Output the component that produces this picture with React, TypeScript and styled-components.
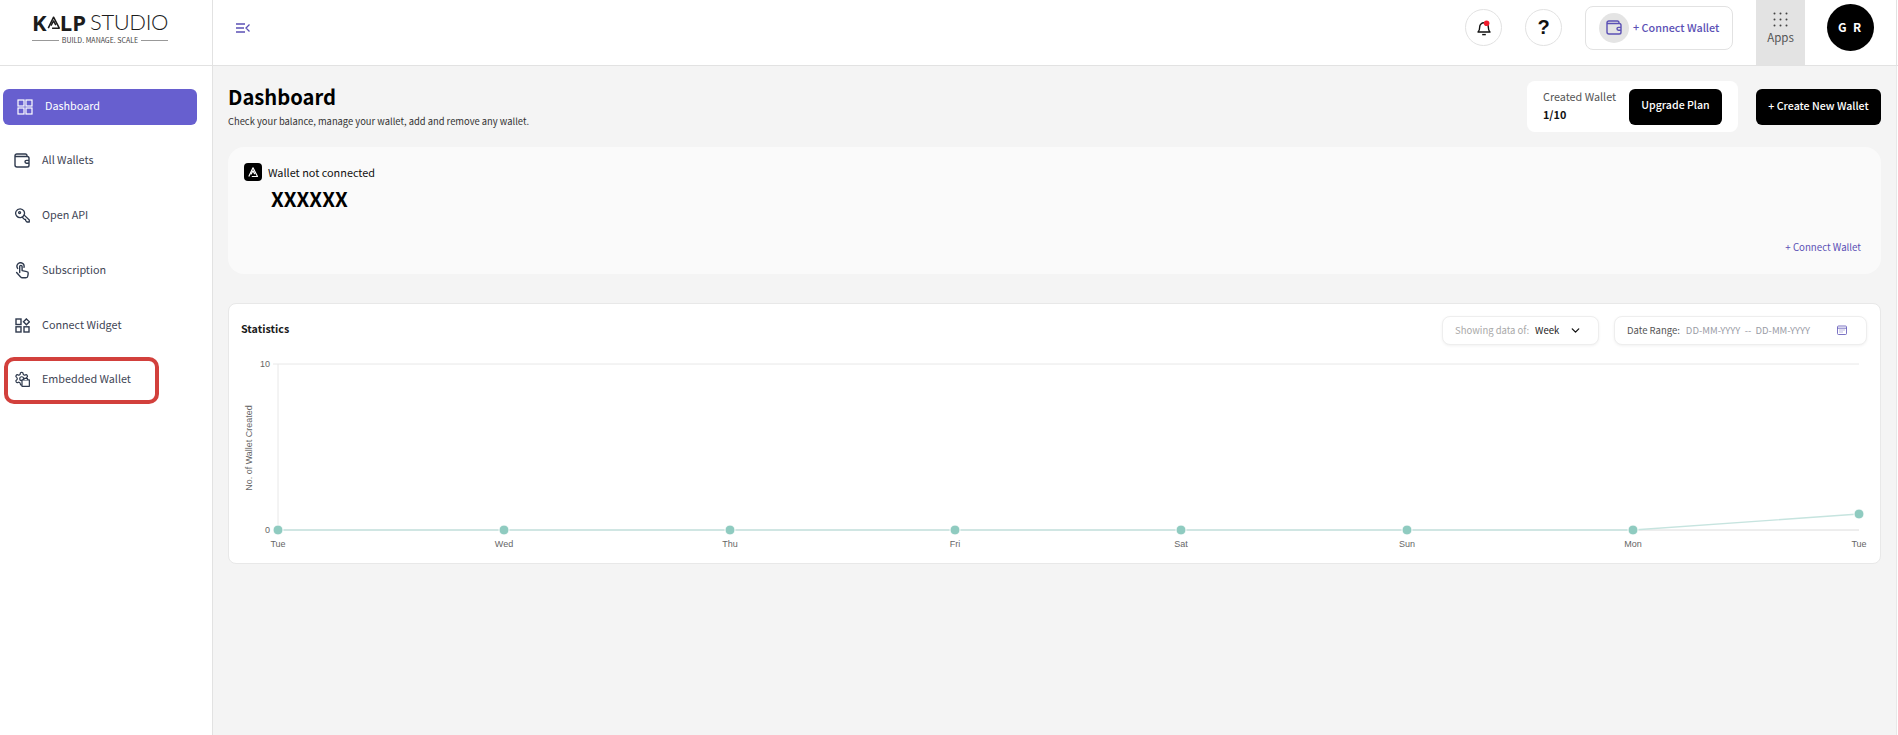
import React from "react";
import styled, { createGlobalStyle } from "styled-components";
import { ChevronDown } from "lucide-react";

const FONT = `"Noto Sans CJK JP", "Noto Sans", sans-serif`;
const PURPLE = "#5b50b5";
const INK = "#2f3a4e";

const GlobalStyle = createGlobalStyle`
  html, body {
    margin: 0;
    padding: 0;
    height: 100%;
    overflow: hidden;
    background: #fff;
    font-family: ${FONT};
  }
  *, *::before, *::after { box-sizing: border-box; }
`;

const KalpMark: React.FC<{ size: number; color: string }> = ({ size, color }) => (
  <svg width={size} height={size} viewBox="0 0 20 20" fill="none" stroke={color} strokeWidth="2" strokeLinejoin="round">
    <path d="M3 17.5 L10 3 L17.5 17.5 H8" />
    <path d="M6.5 14 L10 8 L13 13.5" />
  </svg>
);

const DashboardIcon = () => (
  <svg width="16" height="16" viewBox="0 0 16 16" fill="none" stroke="#fff" strokeWidth="1.2">
    <rect x="1" y="1" width="6" height="6" />
    <rect x="9" y="1" width="6" height="6" />
    <rect x="1" y="9" width="6" height="6" />
    <rect x="9" y="9" width="6" height="6" />
  </svg>
);

const WalletIcon: React.FC<{ color?: string }> = ({ color = INK }) => (
  <svg width="16" height="15" viewBox="0 0 16 15" fill="none" stroke={color} strokeWidth="1.4">
    <path d="M13 3.5 V2.6 C13 1.7 12.3 1 11.4 1 H2.8 C1.8 1 1 1.8 1 2.8 V12 C1 13.1 1.9 14 3 14 H13.2 C14.2 14 15 13.2 15 12.2 V5.3 C15 4.3 14.2 3.5 13.2 3.5 H1.6" />
    <path d="M15 7.4 H12.4 C11.6 7.4 11 8 11 8.8 C11 9.6 11.6 10.2 12.4 10.2 H15" />
  </svg>
);

const KeyIcon = () => (
  <svg width="15" height="15" viewBox="0 0 15 15" fill="none" stroke={INK} strokeWidth="1.3" strokeLinejoin="round">
    <path d="M5.2 0.8 A4.4 4.4 0 1 1 1.7 8 A4.4 4.4 0 0 1 5.2 0.8 Z" />
    <circle cx="4.6" cy="4.6" r="1" />
    <path d="M8.7 6.6 L14.3 12 V14 H12 L10.6 12.6 V11.4 H9.4 L6.8 8.8" />
  </svg>
);

const TapIcon = () => (
  <svg width="15" height="17" viewBox="0 0 15 17" fill="none" stroke={INK} strokeWidth="1.4" strokeLinejoin="round" strokeLinecap="round">
    <path d="M2.6 6.4 A3.6 3.6 0 1 1 9 5.2" />
    <path d="M4.7 10.6 V4.6 A1.2 1.2 0 0 1 7.1 4.6 V8.6 L11.8 9.6 A1.7 1.7 0 0 1 13.2 11.5 L12.8 14 A2 2 0 0 1 10.8 15.8 H7.4 A2.2 2.2 0 0 1 5.6 14.9 L1.6 10.6" />
  </svg>
);

const WidgetIcon = () => (
  <svg width="15" height="15" viewBox="0 0 15 15" fill="none" stroke={INK} strokeWidth="1.4">
    <rect x="1" y="1" width="5" height="5.5" />
    <rect x="1" y="8.8" width="5" height="5.2" />
    <rect x="9" y="8.8" width="5" height="5.2" />
    <path d="M11.4 0.9 L14.4 3.8 L11.4 6.7 L8.5 3.8 Z" />
  </svg>
);

const GearWalletIcon = () => (
  <svg width="16" height="16" viewBox="0 0 25 25" fill="none" stroke={INK} strokeWidth="1.9" strokeLinejoin="round">
    <path d="M12.22 2h-.44a2 2 0 0 0-2 2v.18a2 2 0 0 1-1 1.73l-.43.25a2 2 0 0 1-2 0l-.15-.08a2 2 0 0 0-2.73.73l-.22.38a2 2 0 0 0 .73 2.73l.15.1a2 2 0 0 1 1 1.72v.51a2 2 0 0 1-1 1.74l-.15.09a2 2 0 0 0-.73 2.73l.22.38a2 2 0 0 0 2.73.73l.15-.08a2 2 0 0 1 2 0l.43.25a2 2 0 0 1 1 1.73V20a2 2 0 0 0 2 2h.44a2 2 0 0 0 2-2v-.18a2 2 0 0 1 1-1.73l.43-.25a2 2 0 0 1 2 0l.15.08a2 2 0 0 0 2.73-.73l.22-.39a2 2 0 0 0-.73-2.73l-.15-.08a2 2 0 0 1-1-1.74v-.5a2 2 0 0 1 1-1.74l.15-.09a2 2 0 0 0 .73-2.73l-.22-.38a2 2 0 0 0-2.73-.73l-.15.08a2 2 0 0 1-2 0l-.43-.25a2 2 0 0 1-1-1.73V4a2 2 0 0 0-2-2z" />
    <circle cx="12" cy="12" r="3" />
    <rect x="12.5" y="14" width="11.5" height="10" fill="#fff" />
    <path d="M15.5 14 V11.5 H21 V14" fill="#fff" />
  </svg>
);

const BellIcon = () => (
  <svg width="14" height="16" viewBox="0 0 14 16" fill="none" stroke="#111" strokeWidth="1.4">
    <path d="M1 12 C2.4 10.8 2.7 9.6 2.7 7 C2.7 4.4 4.6 2.8 7 2.8 C9.4 2.8 11.3 4.4 11.3 7 C11.3 9.6 11.6 10.8 13 12 Z" strokeLinejoin="round" />
    <path d="M5.2 14.6 H8.8" />
    <circle cx="9.6" cy="3.2" r="2.8" fill="#f01c2c" stroke="none" />
  </svg>
);

const DotsIcon = () => (
  <svg width="15" height="15" viewBox="0 0 15 15" fill="#444">
    {[1.5, 7.5, 13.5].flatMap((y) =>
      [1.5, 7.5, 13.5].map((x) => <circle key={`${x}-${y}`} cx={x} cy={y} r="1" />)
    )}
  </svg>
);

const CalendarIcon = () => (
  <svg width="10" height="10" viewBox="0 0 10 10" fill="none" stroke={PURPLE} strokeWidth="0.8">
    <rect x="0.5" y="1" width="9" height="8.5" rx="1" />
    <path d="M0.5 3.2 H9.5" />
    <path d="M2.5 5 H3.5 M4.5 5 H5.5 M6.5 5 H7.5 M2.5 7 H3.5 M4.5 7 H5.5" />
  </svg>
);

const navItems = [
  { label: "All Wallets", icon: <WalletIcon /> },
  { label: "Open API", icon: <KeyIcon /> },
  { label: "Subscription", icon: <TapIcon /> },
  { label: "Connect Widget", icon: <WidgetIcon /> },
  { label: "Embedded Wallet", icon: <GearWalletIcon />, marked: true },
];

const POINTS = [49, 275, 501, 726, 952, 1178, 1404, 1630];
const DAYS = ["Tue", "Wed", "Thu", "Fri", "Sat", "Sun", "Mon", "Tue"];
const Y_TOP = 19;
const Y_ZERO = 185;

const Chart: React.FC = () => (
  <ChartSvg viewBox="0 0 1650 218" width="1650" height="218">
    <line x1="44" y1={Y_TOP} x2="1630" y2={Y_TOP} stroke="#e8e8e8" />
    <line x1="49" y1={Y_TOP} x2="49" y2={Y_ZERO} stroke="#e8e8e8" />
    <line x1="49" y1={Y_ZERO} x2="1630" y2={Y_ZERO} stroke="#dcdcdc" />
    <polyline
      points={POINTS.map((x, i) => `${x},${i === 7 ? 169 : Y_ZERO}`).join(" ")}
      fill="none"
      stroke="#c6e4df"
      strokeWidth="1.3"
    />
    {POINTS.map((x, i) => (
      <circle key={i} cx={x} cy={i === 7 ? 169 : Y_ZERO} r="5" fill="#8fcbc0" stroke="#fff" strokeWidth="1" />
    ))}
    <AxisText x="41" y={Y_TOP + 3} textAnchor="end">10</AxisText>
    <AxisText x="41" y={Y_ZERO + 3} textAnchor="end">0</AxisText>
    {POINTS.map((x, i) => (
      <AxisText key={i} x={x} y="202" textAnchor="middle">{DAYS[i]}</AxisText>
    ))}
    <AxisText x="0" y="0" textAnchor="middle" transform="translate(23 103) rotate(-90)">
      No. of Wallet Created
    </AxisText>
  </ChartSvg>
);

const App: React.FC = () => (
  <>
    <GlobalStyle />
    <Page>
      <Header>
        <LogoCell>
          <Logo>
            <LogoName>
              <b>K</b>
              <KalpMark size={17} color="#1c1c1c" />
              <b>LP</b>
              <span>STUDIO</span>
            </LogoName>
            <Tagline>BUILD. MANAGE. SCALE</Tagline>
          </Logo>
        </LogoCell>
        <TopBar>
          <MenuToggle viewBox="0 0 14 10" width="14" height="10" fill="none" stroke={PURPLE} strokeWidth="1.3">
            <path d="M0 1 H9 M0 5 H8 M0 9 H9 M13.5 1.5 L10 5 L13.5 8.5" />
          </MenuToggle>
          <TopActions>
            <RoundButton><BellIcon /></RoundButton>
            <RoundButton $bold>?</RoundButton>
            <ConnectBox>
              <ConnectIcon><WalletIcon color={PURPLE} /></ConnectIcon>
              + Connect Wallet
            </ConnectBox>
            <AppsTile>
              <DotsIcon />
              <span>Apps</span>
            </AppsTile>
            <Avatar>G R</Avatar>
          </TopActions>
        </TopBar>
      </Header>
      <Body>
        <Sidebar>
          <ActiveItem>
            <NavIcon $width={16}><DashboardIcon /></NavIcon>
            Dashboard
          </ActiveItem>
          {navItems.map((item) => (
            <NavItem key={item.label} $marked={item.marked}>
              <NavIcon $width={18}>{item.icon}</NavIcon>
              {item.label}
            </NavItem>
          ))}
        </Sidebar>
        <Main>
          <TitleRow>
            <div>
              <Title>Dashboard</Title>
              <Subtitle>Check your balance, manage your wallet, add and remove any wallet.</Subtitle>
            </div>
            <TitleActions>
              <PlanBox>
                <PlanText>
                  Created Wallet
                  <strong>1/10</strong>
                </PlanText>
                <BlackButton $width={93}>Upgrade Plan</BlackButton>
              </PlanBox>
              <BlackButton $width={125}>+ Create New Wallet</BlackButton>
            </TitleActions>
          </TitleRow>
          <WalletCard>
            <WalletStatus>
              <WalletBadge><KalpMark size={12} color="#fff" /></WalletBadge>
              Wallet not connected
            </WalletStatus>
            <Balance>XXXXXX</Balance>
            <ConnectLink>+ Connect Wallet</ConnectLink>
          </WalletCard>
          <StatsCard>
            <StatsHead>
              <StatsTitle>Statistics</StatsTitle>
              <Filters>
                <FilterBox $width={157} $right={16}>
                  <Muted>Showing data of:</Muted>
                  <FilterValue>Week</FilterValue>
                  <ChevronDown size={13} strokeWidth={2.4} color="#111" />
                </FilterBox>
                <FilterBox $width={253} $right={19}>
                  <FilterLabel>Date Range:</FilterLabel>
                  <DateValue>DD-MM-YYYY&nbsp; -- &nbsp;DD-MM-YYYY</DateValue>
                  <CalendarIcon />
                </FilterBox>
              </Filters>
            </StatsHead>
            <Chart />
          </StatsCard>
        </Main>
      </Body>
    </Page>
  </>
);

export default App;

const Page = styled.div`
  width: 1898px;
  height: 735px;
  display: flex;
  flex-direction: column;
  overflow: hidden;
`;

const Header = styled.header`
  height: 66px;
  flex: none;
  display: flex;
  border-bottom: 1px solid #e2e2e2;
  background: #fff;
`;

const LogoCell = styled.div`
  width: 213px;
  flex: none;
  display: flex;
  justify-content: center;
  padding: 12px 12px 0 0;
  border-right: 1px solid #e2e2e2;
`;

const Logo = styled.div`
  width: 136px;
  display: flex;
  flex-direction: column;
`;

const LogoName = styled.div`
  display: flex;
  align-items: center;
  height: 20px;
  font-family: "Open Sans", sans-serif;
  font-size: 22px;
  color: #1c1c1c;
  line-height: 20px;
  white-space: nowrap;
  b {
    font-weight: 700;
  }
  svg {
    margin: 0 -1px;
  }
  span {
    margin-left: 4px;
    font-family: "Lato", sans-serif;
    font-weight: 300;
    letter-spacing: -0.4px;
  }
`;

const Tagline = styled.div`
  display: flex;
  align-items: center;
  gap: 3px;
  margin-top: 2px;
  font-size: 7px;
  line-height: 12px;
  color: #444;
  white-space: nowrap;
  &::before,
  &::after {
    content: "";
    flex: 1;
    height: 1px;
    background: #999;
  }
`;

const TopBar = styled.div`
  flex: 1;
  display: flex;
  align-items: center;
  justify-content: space-between;
  padding-left: 23px;
  border-right: 1px solid #e2e2e2;
  margin-right: 1px;
`;

const MenuToggle = styled.svg`
  margin-top: -9px;
`;

const TopActions = styled.div`
  height: 100%;
  display: flex;
  align-items: center;
`;

const RoundButton = styled.div<{ $bold?: boolean }>`
  width: 37px;
  height: 37px;
  margin: 0 23px 10px 0;
  display: flex;
  align-items: center;
  justify-content: center;
  border: 1px solid #e2e2e2;
  border-radius: 50%;
  background: #fff;
  font-family: "Liberation Sans", sans-serif;
  font-size: 20px;
  font-weight: ${(p) => (p.$bold ? 700 : 400)};
  color: #111;
`;

const ConnectBox = styled.div`
  width: 148px;
  height: 44px;
  margin: 0 23px 10px 0;
  padding: 0 0 2px 13px;
  display: flex;
  align-items: center;
  gap: 4px;
  border: 1px solid #e2e2e2;
  border-radius: 8px;
  font-size: 10.8px;
  font-weight: 500;
  color: ${PURPLE};
  white-space: nowrap;
`;

const ConnectIcon = styled.div`
  width: 30px;
  height: 30px;
  flex: none;
  margin-top: 2px;
  display: flex;
  align-items: center;
  justify-content: center;
  border-radius: 50%;
  background: #e4e4e4;
`;

const AppsTile = styled.div`
  width: 49px;
  height: 100%;
  display: flex;
  flex-direction: column;
  align-items: center;
  justify-content: center;
  padding-bottom: 8px;
  background: #e3e3e3;
  font-size: 11.5px;
  line-height: 16px;
  color: #555;
  svg {
    margin-bottom: 2px;
  }
`;

const Avatar = styled.div`
  width: 47px;
  height: 47px;
  margin: 0 22px 10px 22px;
  padding-bottom: 2px;
  display: flex;
  align-items: center;
  justify-content: center;
  border-radius: 50%;
  background: #000;
  color: #fff;
  font-size: 12px;
  font-weight: 700;
  letter-spacing: 1.8px;
`;

const Body = styled.div`
  flex: 1;
  display: flex;
  min-height: 0;
`;

const Sidebar = styled.nav`
  width: 213px;
  flex: none;
  padding: 23px 15px 0 3px;
  border-right: 1px solid #e2e2e2;
  background: #fff;
`;

const ActiveItem = styled.div`
  height: 36px;
  margin-bottom: 17px;
  padding: 0 0 4px 14px;
  display: flex;
  align-items: center;
  gap: 12px;
  border-radius: 6px;
  background: #675fcf;
  color: #fff;
  font-size: 10.8px;
`;

const NavItem = styled.div<{ $marked?: boolean }>`
  position: relative;
  height: 36px;
  margin-bottom: 19px;
  padding: 0 0 3px 10px;
  display: flex;
  align-items: center;
  gap: 11px;
  color: #3f4656;
  font-size: 10.8px;
  &:last-child {
    margin-top: -1px;
  }
  ${(p) =>
    p.$marked &&
    `&::after {
      content: "";
      position: absolute;
      left: 1px;
      top: -4px;
      width: 155px;
      height: 47px;
      border: 4px solid #d2403c;
      border-radius: 10px;
    }`}
`;

const NavIcon = styled.span<{ $width: number }>`
  width: ${(p) => p.$width}px;
  margin-top: 3px;
  display: flex;
  justify-content: center;
`;

const Main = styled.main`
  flex: 1;
  padding: 15px 15px 0 15px;
  background: #f4f4f4;
  border-right: 1px solid #e8e8e8;
  margin-right: 1px;
`;

const TitleRow = styled.div`
  height: 51px;
  display: flex;
  justify-content: space-between;
  align-items: flex-start;
`;

const Title = styled.h1`
  margin: 0;
  font-size: 20.2px;
  line-height: 32px;
  font-weight: 700;
  color: #000;
`;

const Subtitle = styled.p`
  margin: 0;
  font-size: 9.4px;
  line-height: 16px;
  color: #333;
`;

const TitleActions = styled.div`
  display: flex;
  align-items: flex-start;
  gap: 18px;
`;

const PlanBox = styled.div`
  width: 211px;
  height: 51px;
  padding: 0 16px 0 16px;
  display: flex;
  align-items: center;
  justify-content: space-between;
  background: #fff;
  border-radius: 8px;
`;

const PlanText = styled.div`
  display: flex;
  flex-direction: column;
  padding-bottom: 4px;
  font-size: 10.8px;
  line-height: 18px;
  color: #555;
  strong {
    color: #111;
    font-weight: 700;
  }
`;

const BlackButton = styled.div<{ $width: number }>`
  width: ${(p) => p.$width}px;
  height: 36px;
  margin-top: 8px;
  padding-bottom: 4px;
  display: flex;
  align-items: center;
  justify-content: center;
  background: #000;
  border-radius: 6px;
  color: #fff;
  font-size: 10.6px;
  font-weight: 500;
  white-space: nowrap;
  ${PlanBox} & {
    margin-top: 0;
  }
`;

const WalletCard = styled.section`
  position: relative;
  height: 127px;
  margin-top: 15px;
  padding: 16px 16px 0;
  border-radius: 16px;
  background: #fafafa;
`;

const WalletStatus = styled.div`
  display: flex;
  align-items: center;
  gap: 6px;
  font-size: 10.9px;
  line-height: 18px;
  color: #111;
`;

const WalletBadge = styled.span`
  width: 18px;
  height: 18px;
  display: flex;
  align-items: center;
  justify-content: center;
  border-radius: 4px;
  background: #000;
`;

const Balance = styled.div`
  margin: 2px 0 0 27px;
  font-size: 20.4px;
  line-height: 30px;
  font-weight: 700;
  color: #000;
`;

const ConnectLink = styled.div`
  margin-top: 26px;
  text-align: right;
  padding-right: 4px;
  font-size: 9.7px;
  line-height: 16px;
  color: ${PURPLE};
`;

const StatsCard = styled.section`
  height: 261px;
  margin: 29px 0 0 0;
  padding-top: 11px;
  border: 1px solid #e8e8e8;
  border-radius: 8px;
  background: #fff;
`;

const StatsHead = styled.div`
  height: 30px;
  padding: 0 13px 0 12px;
  display: flex;
  align-items: center;
  justify-content: space-between;
`;

const StatsTitle = styled.div`
  margin-bottom: 4px;
  font-size: 10.7px;
  font-weight: 700;
  color: #1a1a1a;
`;

const Filters = styled.div`
  display: flex;
  gap: 15px;
`;

const FilterBox = styled.div<{ $width: number; $right: number }>`
  width: ${(p) => p.$width}px;
  height: 29px;
  padding: 0 ${(p) => p.$right}px 0 12px;
  display: flex;
  align-items: center;
  border: 1px solid #eee;
  border-radius: 8px;
  box-shadow: 0 1px 3px rgba(0, 0, 0, 0.06);
  background: #fff;
  font-size: 9.5px;
  white-space: nowrap;
`;

const Muted = styled.span`
  color: #a9a9a9;
  margin-right: 6px;
`;

const FilterValue = styled.span`
  color: #222;
  flex: 1;
`;

const FilterLabel = styled.span`
  color: #555;
  margin-right: 6px;
`;

const DateValue = styled.span`
  color: #9a9ca6;
  flex: 1;
`;

const ChartSvg = styled.svg`
  display: block;
`;

const AxisText = styled.text`
  font-family: "Liberation Sans", sans-serif;
  font-size: 9px;
  fill: #666;
`;
